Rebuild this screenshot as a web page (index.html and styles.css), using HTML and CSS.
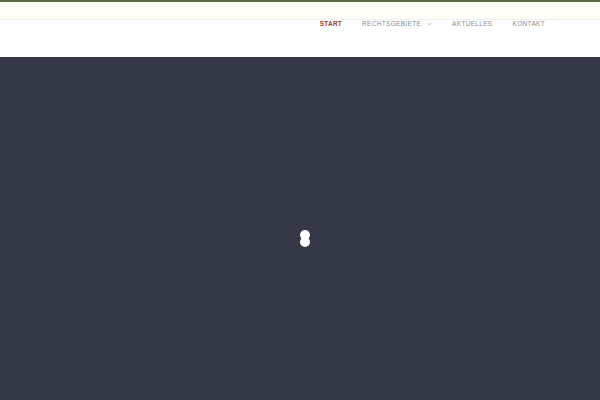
FILE: index.html
```html
<!DOCTYPE html>
<html lang="de">
<head>
<meta charset="utf-8">
<title>Start</title>
<link rel="stylesheet" href="styles.css">
</head>
<body>
<div class="topline"></div>
<div class="topbar"></div>
<header class="header">
  <nav class="nav">
    <a class="nav-item active">START</a>
    <a class="nav-item">RECHTSGEBIETE <svg class="chev" width="5" height="4" viewBox="0 0 5 4"><path d="M0.5 1 L2.5 3 L4.5 1" fill="none" stroke="#aaa" stroke-width="0.7"/></svg></a>
    <a class="nav-item">AKTUELLES</a>
    <a class="nav-item">KONTAKT</a>
  </nav>
</header>
<main class="hero">
  <div class="loader"><span class="dot"></span><span class="dot"></span></div>
</main>
</body>
</html>
```
FILE: styles.css
```css
html, body { margin: 0; padding: 0; }
body { width: 600px; height: 400px; overflow: hidden; font-family: "Liberation Sans", Arial, sans-serif; background: #343746; }
.topline { height: 2px; background: #5b6b3f; }
.topbar { height: 17px; background: #fefef9; border-bottom: 1px solid #efefef; }
.header { height: 37px; background: #ffffff; display: flex; justify-content: flex-end; }
.nav { display: flex; align-items: flex-start; padding-top: 0; padding-right: 55px; }
.nav-item { font-size: 6.5px; letter-spacing: 0.32px; color: #8c8c8c; line-height: 8px; margin-left: 20px; display: flex; align-items: center; }
.nav-item.active { color: #a0442c; font-weight: bold; letter-spacing: 0.2px; }
.chev { margin-left: 6px; }
.hero { height: 343px; background: #343746; display: flex; justify-content: center; align-items: flex-start; }
.loader { margin-top: 173px; margin-left: 10px; display: flex; flex-direction: column; align-items: center; }
.dot { width: 10px; height: 10px; border-radius: 50%; background: #ffffff; }
.dot + .dot { margin-top: -3px; }
```
